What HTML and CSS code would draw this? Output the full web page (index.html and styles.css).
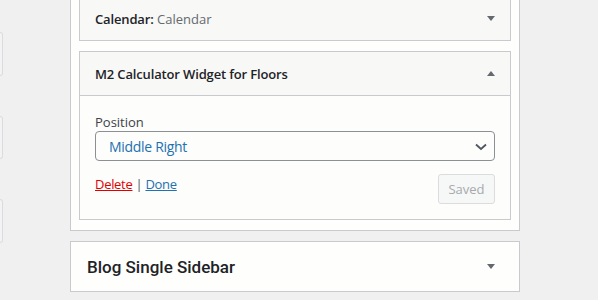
FILE: index.html
```html
<!DOCTYPE html>
<html lang="en">
<head>
<meta charset="utf-8">
<title>Widgets</title>
<link rel="stylesheet" href="styles.css">
</head>
<body>
<div class="page">
  <div class="avail">
    <div class="avail-item a1"></div>
    <div class="avail-item a2"></div>
    <div class="avail-item a3"></div>
  </div>
  <div class="main">
    <div class="sidebar">
      <div class="widget">
        <div class="widget-top">
          <h3 class="widget-title">Calendar:<span class="in-title"> Calendar</span></h3>
          <span class="arrow down"></span>
        </div>
      </div>
      <div class="widget open">
        <div class="widget-top">
          <h3 class="widget-title">M2 Calculator Widget for Floors</h3>
          <span class="arrow up"></span>
        </div>
        <div class="widget-inside">
          <label class="field-label">Position</label>
          <div class="select">
            <span class="select-value">Middle Right</span>
            <svg class="chev" width="12" height="8" viewBox="0 0 12 8"><path d="M1 1.5 L6 6 L11 1.5" fill="none" stroke="#50575e" stroke-width="1.8"/></svg>
          </div>
          <div class="controls">
            <div class="links"><a class="delete" href="#">Delete</a><span class="sep"> | </span><a class="done" href="#">Done</a></div>
            <button class="saved" disabled>Saved</button>
          </div>
        </div>
      </div>
    </div>
    <div class="sidebar closed">
      <h2 class="sidebar-name">Blog Single Sidebar</h2>
      <span class="arrow down"></span>
    </div>
  </div>
</div>
</body>
</html>
```
FILE: styles.css
```css
* { box-sizing: border-box; }
html, body { margin: 0; padding: 0; }
body {
  background: #f0f0f1;
  font-family: "Open Sans", "Noto Sans", sans-serif;
  font-size: 13px;
  color: #1d2327;
  width: 598px;
  height: 300px;
  overflow: hidden;
}
.page {
  display: flex;
  align-items: flex-start;
}
.avail {
  width: 3px;
  display: flex;
  flex-direction: column;
}
.avail-item {
  height: 44px;
  border: 1px solid #dcdcde;
  border-left: none;
  border-radius: 0 3px 3px 0;
  background: #f3f3f3;
}
.a1 { margin-top: 32px; }
.a2 { margin-top: 40px; height: 43px; }
.a3 { margin-top: 40px; }
.main {
  margin-left: 67px;
  width: 450px;
  margin-top: -13px;
}
.sidebar {
  background: #fefefc;
  border: 1px solid #c9cacd;
  padding: 8px 8px 10px;
}
.widget {
  border: 1px solid #c9cacd;
  background: #f8f8f6;
}
.widget + .widget { margin-top: 10px; }
.widget-top {
  height: 43px;
  display: flex;
  align-items: center;
  justify-content: space-between;
  padding: 0 15px 0 15px;
}
.widget-title {
  margin: 0;
  font-size: 13px;
  font-weight: 600;
  letter-spacing: -0.15px;
  color: #1d2327;
}
.in-title {
  font-weight: 400;
  letter-spacing: 0;
  color: #646970;
}
.arrow {
  width: 0;
  height: 0;
  border-left: 4px solid transparent;
  border-right: 4px solid transparent;
}
.arrow.down { border-top: 5px solid #646970; }
.arrow.up { border-bottom: 5px solid #646970; }
.widget-inside {
  border-top: 1px solid #c9cacd;
  background: #fdfdfb;
  padding: 17px 15px 15px;
}
.field-label {
  display: block;
  line-height: 18px;
  color: #3c434a;
  font-size: 13px;
}
.select {
  height: 30px;
  border: 1px solid #8c8f94;
  border-radius: 4px;
  display: flex;
  align-items: center;
  justify-content: space-between;
  padding: 0 7px 0 13px;
  background: #fdfdfb;
}
.select-value {
  color: #2271b1;
  font-size: 14px;
  letter-spacing: -0.3px;
}
.chev { margin-top: 2px; }
.controls {
  margin-top: 13px;
  display: flex;
  justify-content: space-between;
  align-items: flex-start;
}
.links {
  line-height: 20px;
  color: #50575e;
  letter-spacing: -0.3px;
}
.delete { color: #e00000; }
.done { color: #2271b1; }
.saved {
  width: 57px;
  height: 30px;
  border: 1px solid #dcdcde;
  border-radius: 3px;
  background: #f6f7f7;
  color: #a7aaad;
  font-family: "Open Sans", "Noto Sans", sans-serif;
  font-size: 13px;
  padding: 0;
}
.sidebar.closed {
  margin-top: 10px;
  height: 51px;
  display: flex;
  align-items: center;
  justify-content: space-between;
  padding: 0 24px 0 16px;
}
.sidebar-name {
  margin: 0;
  font-family: Roboto, "Open Sans", sans-serif;
  font-size: 17px;
  font-weight: 500;
  color: #1d2327;
}
```
